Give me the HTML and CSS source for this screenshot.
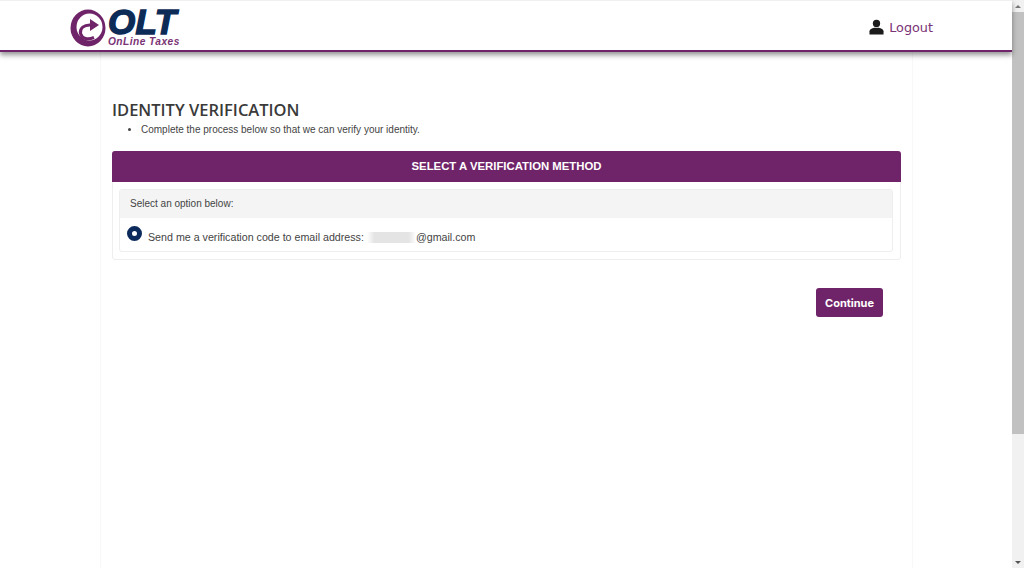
FILE: index.html
```html
<!DOCTYPE html>
<html lang="en">
<head>
<meta charset="utf-8">
<title>Identity Verification</title>
<link rel="stylesheet" href="styles.css">
</head>
<body>
<div class="page">
  <header class="topbar">
    <a class="logo">
      <svg class="logo-mark" viewBox="0 0 36 40" width="36" height="40">
        <path fill-rule="evenodd" d="M35.500 20A17.500 18.500 0 1 1 0.500 20A17.500 18.500 0 1 1 35.500 20ZM32.500 19A13 13.500 0 1 0 6.500 19A13 13.500 0 1 0 32.500 19Z" fill="#6f2469"/>
        <path d="M20 11L29 17L20 23Z" fill="#6f2469"/>
        <path d="M21 17C14 16.500 9.500 20.500 10.500 25.500C12 31 18 32 24 29.500" fill="none" stroke="#6f2469" stroke-width="3"/>
      </svg>
      <span class="logo-text">
        <span class="logo-olt">OLT</span>
        <span class="logo-sub">OnLine Taxes</span>
      </span>
    </a>
    <a class="logout">
      <svg viewBox="0 0 16 16" width="15" height="16"><circle cx="8" cy="4.2" r="3.9" fill="#1b1b1b"/><path d="M0.5 16V12.6C0.5 10.4 3 9.2 5.6 8.8H10.4C13 9.2 15.5 10.4 15.5 12.6V16Z" fill="#1b1b1b"/></svg>
      <span>Logout</span>
    </a>
  </header>
  <main class="content">
    <h1 class="title">IDENTITY VERIFICATION</h1>
    <ul class="intro"><li>Complete the process below so that we can verify your identity.</li></ul>
    <section class="card">
      <h2 class="card-head">SELECT A VERIFICATION METHOD</h2>
      <div class="card-body">
        <div class="options">
          <div class="options-head">Select an option below:</div>
          <div class="option">
            <span class="radio"></span>
            <span class="option-text">Send me a verification code to email address: <span class="blur"></span>@gmail.com</span>
          </div>
        </div>
      </div>
    </section>
    <div class="actions"><button class="continue" type="button">Continue</button></div>
  </main>
</div>
<div class="scrollbar">
  <span class="arrow up"></span>
  <span class="thumb"></span>
  <span class="arrow down"></span>
</div>
</body>
</html>
```

FILE: styles.css
```css
html, body { margin: 0; height: 100%; overflow: hidden; }
body { display: flex; background: #fff; font-family: "Liberation Sans", Arial, sans-serif; color: #333; }
.page { flex: 1; min-width: 0; display: flex; flex-direction: column; height: 568px; }
.topbar {
  box-sizing: border-box; height: 52px; flex: none; display: flex; align-items: center;
  justify-content: space-between; padding: 0 79px 0 70px; background: #fff;
  border-top: 1px solid #f0f0f0; border-bottom: 2px solid #6f2469;
  box-shadow: 0 3px 5px rgba(60, 60, 60, .55); position: relative; z-index: 1;
}
.logo { display: flex; align-items: center; gap: 2px; }
.logo-mark { display: block; margin-top: 4px; }
.logo-text { display: flex; flex-direction: column; font-style: italic; font-weight: 700; margin-top: 3px; }
.logo-olt { font: italic 700 35px/28px "Liberation Sans", sans-serif; color: #0c2b57; letter-spacing: .4px; -webkit-text-stroke: 1.4px #0c2b57; }
.logo-sub { font: italic 700 10.2px/11px "Liberation Sans", sans-serif; color: #7a3375; letter-spacing: .45px; }
.logout { display: flex; align-items: center; gap: 5px; margin-top: 3px; font: 12.8px "DejaVu Sans", sans-serif; color: #7a3375; }
.content {
  box-sizing: border-box; flex: 1; width: 813px; margin-left: 100px; padding: 47px 11px 0;
  border: solid #f8f8f8; border-width: 0 1px;
}
.title { margin: 0; font: 600 16.5px/22px "Open Sans", sans-serif; color: #3a3a3a; }
.intro { margin: 2px 0 14px; padding-left: 29px; font-size: 10px; line-height: 14px; color: #444; }
.card { border: 1px solid #eee; border-radius: 3px; background: #fff; }
.card-head {
  margin: -1px -1px 0; height: 31px; background: #6f2469; color: #fff; border-radius: 3px 3px 0 0;
  font-size: 11.35px; line-height: 31px; font-weight: 700; text-align: center;
}
.card-body { padding: 7px 7px 7px 6px; }
.options { border: 1px solid #eee; border-radius: 3px; }
.options-head { height: 28px; padding-left: 10px; background: #f4f4f4; font-size: 10px; line-height: 28px; color: #444; }
.option { display: flex; height: 33px; padding-left: 7px; gap: 6px; }
.radio { box-sizing: border-box; flex: none; width: 15px; height: 15px; margin-top: 8px; border-radius: 50%; border: 5px solid #0c2b5c; background: #fff; }
.option-text { font-size: 10.68px; line-height: 14px; padding-top: 12px; color: #444; }
.blur { display: inline-block; width: 49px; height: 11px; vertical-align: -2px; background: linear-gradient(90deg, #fff, #e4e4e4 15%, #e4e4e4 85%, #fff); }
.actions { display: flex; justify-content: flex-end; padding: 28px 18px 0 0; }
.continue {
  box-sizing: border-box; width: 67px; height: 29px; padding: 0; border: 0; border-radius: 3px;
  background: #6f2469; color: #fff; font: 700 11px "Inter", sans-serif;
}
.scrollbar { flex: none; width: 12px; height: 568px; background: #f1f1f1; display: flex; flex-direction: column; align-items: center; }
.thumb { width: 12px; height: 422px; background: #c1c1c1; }
.arrow { flex: none; height: 12px; width: 12px; position: relative; }
.arrow::after { content: ""; position: absolute; left: 3px; border: 3px solid transparent; }
.up::after { top: 2px; border-bottom: 3px solid #777; }
.down { margin-top: auto; }
.down::after { top: 5px; border-top: 3px solid #555; }
```
